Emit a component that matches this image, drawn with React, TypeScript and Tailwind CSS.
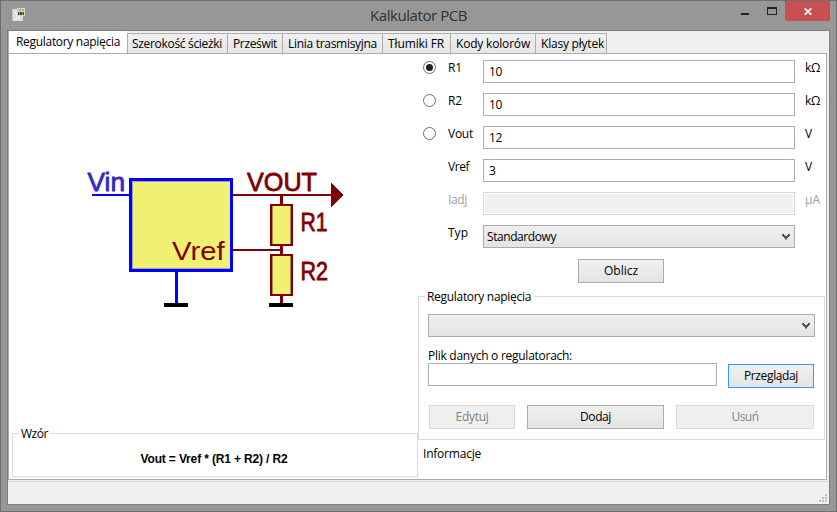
import { useLayoutEffect, useRef, useState } from "react";
import type { ReactNode } from "react";
import clsx from "clsx";

/** Single-line label whose tracking is tuned so that it spans `w` pixels. */
function Label({ text, w, className }: { text: string; w: number; className?: string }) {
  const ref = useRef<HTMLSpanElement>(null);
  const [spacing, setSpacing] = useState(0);
  useLayoutEffect(() => {
    if (ref.current) {
      const natural = ref.current.getBoundingClientRect().width;
      setSpacing((w - natural) / text.length);
    }
  }, [text, w]);
  return (
    <span ref={ref} className={clsx("inline-block whitespace-pre", className)} style={{ letterSpacing: spacing }}>
      {text}
    </span>
  );
}

const tabs = [
  { text: "Szerokość ścieżki", w: 90, box: "w-[100px] pl-[4px]" },
  { text: "Prześwit", w: 44, box: "w-[55px] pl-[5px]" },
  { text: "Linia trasmisyjna", w: 89, box: "w-[100px] pl-[5px]" },
  { text: "Tłumiki FR", w: 56, box: "w-[68px] pl-[5px]" },
  { text: "Kody kolorów", w: 74, box: "w-[85px] pl-[5px]" },
  { text: "Klasy płytek", w: 63, box: "w-[72px] border-r pl-[5px]" },
];

const rows = [
  { name: "R1", w: 14, value: "10", unit: "kΩ", uw: 15, radio: true, checked: true },
  { name: "R2", w: 14, value: "10", unit: "kΩ", uw: 15, radio: true },
  { name: "Vout", w: 25, value: "12", unit: "V", uw: 7, radio: true },
  { name: "Vref", w: 21, value: "3", unit: "V", uw: 7 },
  { name: "Iadj", w: 19, value: "", unit: "µA", uw: 15, disabled: true },
];

function Chevron() {
  return (
    <svg className="h-[6px] w-[8px] shrink-0" viewBox="0 0 8 6">
      <path d="M0 0h2v1h1v1h2V1h1V0h2v2H7v1H6v1H5v1H4.500v1h-1V5H3V4H2V3H1V2H0z" fill="#555" />
    </svg>
  );
}

function Button({ children, className, tone }: { children: ReactNode; className?: string; tone?: "focus" | "disabled" }) {
  return (
    <button
      className={clsx(
        "flex h-6 shrink-0 items-center justify-center border",
        tone === "disabled"
          ? "border-[#d9d9d9] bg-[#efefef] text-[#838383]"
          : "bg-gradient-to-b from-[#f0f0f0] to-[#e4e4e4]",
        tone === "focus" && "border-[#3399ff]",
        !tone && "border-[#acacac]",
        className,
      )}
    >
      {children}
    </button>
  );
}

function Combo({ children, className }: { children?: ReactNode; className?: string }) {
  return (
    <div
      className={clsx(
        "flex h-[23px] items-center justify-between border border-[#acacac] bg-gradient-to-b from-[#f0f0f0] to-[#e4e4e4] pl-[3px] pr-1",
        className,
      )}
    >
      <span>{children}</span>
      <Chevron />
    </div>
  );
}

function Schematic() {
  return (
    <svg className="block h-[373px] w-[409px]" viewBox="9 54 409 373" fontFamily="'Liberation Sans', Arial, sans-serif">
      <g shapeRendering="crispEdges">
        <rect x="129" y="178" width="104" height="94" rx="1" fill="#0000ff" />
        <rect x="132" y="181" width="98" height="88" fill="#a4a49c" />
        <rect x="133" y="182" width="97" height="86" fill="#f0f073" />
        <rect x="92" y="194" width="38" height="2" fill="#0000ff" />
        <rect x="175" y="271" width="3" height="33" fill="#0000ff" />
        <rect x="164" y="303" width="24" height="4" rx="1" fill="#000" />
        <g fill="#800000">
          <rect x="233" y="194" width="99" height="2" />
          <rect x="233" y="249" width="48" height="2" />
          <rect x="280" y="195" width="3" height="109" />
          <rect x="270" y="204" width="23" height="42" />
          <rect x="270" y="254" width="23" height="42" />
          <path d="M331 183L343.500 195L331 207z" />
        </g>
        <rect x="272" y="206" width="19" height="38" fill="#b08a48" />
        <rect x="272" y="256" width="19" height="38" fill="#b08a48" />
        <rect x="273" y="206" width="17" height="38" fill="#f0f073" />
        <rect x="273" y="256" width="17" height="38" fill="#f0f073" />
        <rect x="269" y="303" width="24" height="4" rx="1" fill="#000" />
      </g>
      <g fontSize="26">
        <text x="87.500" y="191" textLength="37.500" lengthAdjust="spacingAndGlyphs" fill="#3328c0" stroke="#3328c0" strokeWidth="0.8">Vin</text>
        <g fill="#800000" stroke="#800000" strokeWidth="0.8">
          <text x="247" y="191" textLength="70" lengthAdjust="spacingAndGlyphs">VOUT</text>
          <text x="300.500" y="231" textLength="27" lengthAdjust="spacingAndGlyphs">R1</text>
          <text x="300.500" y="280" textLength="27.500" lengthAdjust="spacingAndGlyphs">R2</text>
        </g>
        <text x="172" y="260" fontSize="25" textLength="52.500" lengthAdjust="spacingAndGlyphs" fill="#800000">Vref</text>
      </g>
    </svg>
  );
}

export default function App() {
  return (
    <div className="flex h-[512px] w-[837px] flex-col overflow-hidden border border-[#6e6e6e] bg-[#979797] px-[6px] pb-[6px] font-['Open_Sans','Noto_Sans',sans-serif] text-[12px] leading-4 text-black">
      {/* Title bar */}
      <header className="flex h-[29px] shrink-0 items-start">
        <svg className="ml-1 mt-[6px] h-4 w-4" viewBox="0 0 16 16">
          <path d="M1 2h11v12H1z" fill="#dedede" />
          <path d="M1 2h1v12H1z" fill="#c4c4c4" />
          <path d="M3 5l3 3v3l-3 2M8 9v4" fill="none" stroke="#f9f9f9" />
          <path d="M6 1h8v8H6z" fill="#d8d8bd" />
          <path d="M7 2h6v2H7z" fill="#b3bb8d" />
          <path d="M7 5h6v3H7z" fill="#4d4743" />
          <path d="M8 5h1v3H8zM11 5h1v3h-1z" fill="#a07764" />
        </svg>
        <div className="flex flex-1 justify-center pl-[69px] pt-1 text-[15px] leading-5 text-[#303030]">
          <Label text="Kalkulator PCB" w={97} />
        </div>
        <div className="mr-[18px] mt-3 h-[2px] w-2 bg-[#222]" />
        <div className="mr-2 mt-[6px] h-2 w-[10px] border border-t-2 border-[#222]" />
        <div className="flex h-5 w-[45px] items-center justify-center bg-[#c75050]">
          <svg className="h-[7px] w-2" viewBox="0 0 8 7">
            <path d="M0.700 0.300L7.300 6.700M7.300 0.300L0.700 6.700" stroke="#fff" strokeWidth="1.700" />
          </svg>
        </div>
      </header>

      <main className="flex w-[823px] flex-1 flex-col border border-[#7f7f7f] bg-[#f0f0f0]">
        {/* Tab strip */}
        <nav className="flex h-[22px] shrink-0">
          <div className="h-[23px] w-[119px] border-l border-[#acacac] bg-white pl-[7px] pt-[3px]">
            <Label text="Regulatory napięcia" w={104} />
          </div>
          {tabs.map((t) => (
            <div
              key={t.text}
              className={clsx("mt-[2px] h-5 border-l border-t border-[#acacac] bg-gradient-to-b from-[#f0f0f0] to-[#e5e5e5] pt-[2px]", t.box)}
            >
              <Label text={t.text} w={t.w} />
            </div>
          ))}
        </nav>

        {/* Tab page */}
        <section className="flex h-[427px] w-[819px] shrink-0 border border-[#acacac] bg-white">
          <div className="flex w-[409px] shrink-0 flex-col">
            <Schematic />
            <div className="ml-[3px] flex h-[50px] flex-col pt-[6px]">
              <div className="flex h-[44px] flex-col border border-[#dcdcdc]">
                <div className="-mt-2 ml-[6px] w-[31px] bg-white pl-[2px]">
                  <Label text="Wzór" w={27} />
                </div>
                <div className="mt-[9px] pr-[2px] text-center font-['Liberation_Sans',Arial,sans-serif] font-bold">
                  <Label text="Vout = Vref * (R1 + R2) / R2" w={147} />
                </div>
              </div>
            </div>
          </div>

          <div className="flex w-[408px] flex-col pt-[6px]">
            {rows.map((r) => (
              <div key={r.name} className={clsx("flex h-[33px] shrink-0", r.disabled && "text-[#a0a0a0]")}>
                <div className="w-[30px] pl-[5px] pt-[1px]">
                  {r.radio && (
                    <div className="flex h-[13px] w-[13px] items-center justify-center rounded-full border border-[#707070] bg-white">
                      {r.checked && <div className="h-[7px] w-[7px] rounded-full bg-[#212121]" />}
                    </div>
                  )}
                </div>
                <div className="w-[35px]">
                  <Label text={r.name} w={r.w} />
                </div>
                <div
                  className={clsx(
                    "h-[23px] w-[312px] border pl-[5px] pt-[3px]",
                    r.disabled ? "border-[#d9d9d9] bg-[#f0f0f0] shadow-[inset_0_0_0_1px_#fff]" : "border-[#abadb3]",
                  )}
                >
                  <Label text={r.value} w={r.value.length * 6.5} />
                </div>
                <div className="pl-[10px]">
                  <Label text={r.unit} w={r.uw} />
                </div>
              </div>
            ))}
            <div className="flex h-[33px] shrink-0 pl-[30px]">
              <div className="w-[35px]">
                <Label text="Typ" w={20} />
              </div>
              <Combo className="w-[312px]">
                <Label text="Standardowy" w={69} />
              </Combo>
            </div>
            <Button className="ml-40 mt-[1px] w-[86px]">
              <Label text="Oblicz" w={34} />
            </Button>

            <div className="mt-[13px] flex h-36 w-[407px] shrink-0 flex-col border border-[#dcdcdc] pl-[9px]">
              <div className="-ml-[3px] -mt-2 w-[109px] bg-white pl-[2px]">
                <Label text="Regulatory napięcia" w={104} />
              </div>
              <Combo className="mt-[9px] w-[387px]" />
              <div className="mt-[11px] h-[15px]">
                <Label text="Plik danych o regulatorach:" w={144} />
              </div>
              <div className="flex">
                <div className="h-[23px] w-[289px] border border-[#abadb3]" />
                <Button tone="focus" className="ml-[11px] mt-[1px] w-[86px]">
                  <Label text="Przeglądaj" w={54} />
                </Button>
              </div>
              <div className="ml-[1px] mt-[17px] flex">
                <Button tone="disabled" className="w-[86px]">
                  <Label text="Edytuj" w={33} />
                </Button>
                <Button className="ml-3 w-[137px]">
                  <Label text="Dodaj" w={31} />
                </Button>
                <Button tone="disabled" className="ml-3 w-[138px]">
                  <Label text="Usuń" w={27} />
                </Button>
              </div>
            </div>
            <div className="ml-[5px] mt-[6px]">
              <Label text="Informacje" w={58} />
            </div>
          </div>
        </section>

        {/* Status bar */}
        <footer className="mt-[1px] flex flex-1 items-end justify-end border-t border-[#d7d7d7] pb-[2px] pr-[2px]">
          <svg className="h-2 w-2" viewBox="0 0 8 8" fill="#bfbfbf" shapeRendering="crispEdges">
            <path d="M6 0h2v2H6zM3 3h2v2H3zM6 3h2v2H6zM0 6h2v2H0zM3 6h2v2H3zM6 6h2v2H6z" />
          </svg>
        </footer>
      </main>
    </div>
  );
}
